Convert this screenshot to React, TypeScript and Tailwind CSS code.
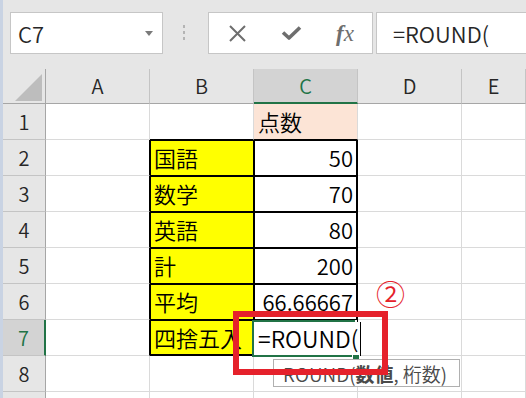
import React from "react";

const GRID = "border-r border-b border-[#dadada] bg-white";
const HDR = "border-r border-b border-r-[#c4c4c4] border-b-[#a6a6a6] bg-[#e6e6e6] flex items-center justify-center text-[20px] text-[#262626]";
const RHDR = "border-r border-b border-r-[#a6a6a6] border-b-[#c4c4c4] bg-[#e6e6e6] flex items-center justify-center text-[20px] text-[#262626]";
const A_T = "border-r border-b border-r-black border-b-[#dadada] bg-white";
const B_LBL = "border-r border-b border-black bg-[#ffff00] shadow-[inset_1px_1px_0_#000] flex items-center pl-[4px] text-[22px] text-black";
const B_LBL_LAST = "border-r border-b border-black bg-[#ffff00] shadow-[inset_1px_1px_0_#000,inset_0_-1px_0_#000] flex items-center pl-[4px] text-[22px] text-black";
const C_NUM = "border-r border-b border-black bg-white shadow-[inset_1px_1px_0_#000,inset_-1px_0_0_#000] flex items-center justify-end pr-[4px] text-[22px] text-black";

const rows: [string, string][] = [
  ["国語", "50"],
  ["数学", "70"],
  ["英語", "80"],
  ["計", "200"],
  ["平均", "66.66667"],
];

export default function App() {
  return (
    <div className="relative w-[526px] h-[398px] overflow-hidden flex bg-[#e6e6e6] font-['Noto_Sans_CJK_JP','Noto_Sans',sans-serif] font-[350]">
      <div className="w-[3px] shrink-0 bg-[#c9d3e3]" />
      <div className="flex-1 min-w-0 flex flex-col">
        {/* formula bar */}
        <div className="h-[69px] shrink-0 flex items-start pt-[12px]">
          <div className="ml-[7px] w-[153px] h-[42px] bg-white border border-[#c6c6c6] flex items-center justify-between pl-[7px] pr-[9px]">
            <span className="text-[22px] leading-none text-[#262626]">C7</span>
            <svg width="8" height="5" viewBox="0 0 8 5">
              <path d="M0 0h8L4 5z" fill="#7a7a7a" />
            </svg>
          </div>
          <div className="ml-[20px] mt-[13px] flex flex-col gap-[3px]">
            <div className="w-[2px] h-[3px] bg-[#b4b4b4]" />
            <div className="w-[2px] h-[3px] bg-[#b4b4b4]" />
            <div className="w-[2px] h-[3px] bg-[#b4b4b4]" />
          </div>
          <div className="ml-[23px] w-[165px] h-[42px] bg-white border border-[#c6c6c6] flex items-center pl-[1px]">
            <div className="w-[54px] flex justify-center">
              <svg width="19" height="19" viewBox="0 0 19 19">
                <path d="M2 2L17 17M17 2L2 17" stroke="#6e6e6e" strokeWidth="2" fill="none" />
              </svg>
            </div>
            <div className="w-[54px] flex justify-center">
              <svg width="21" height="14" viewBox="0 0 21 14">
                <path d="M2 6.5L8 12L19 1.5" stroke="#6e6e6e" strokeWidth="3.6" fill="none" strokeLinejoin="round" />
              </svg>
            </div>
            <div className="w-[54px] flex justify-center">
              <span className="font-['Liberation_Serif',serif] italic text-[23px] leading-none text-[#6e6e6e]">
                <span className="font-bold">f</span>x
              </span>
            </div>
          </div>
          <div className="ml-[3px] flex-1 h-[42px] bg-white border border-r-0 border-[#c6c6c6] flex items-center pl-[16px]">
            <span className="text-[22px] leading-none text-[#262626]">=ROUND(</span>
          </div>
        </div>

        {/* sheet */}
        <div className="grid grid-cols-[43px_104px_104px_104px_104px_1fr] grid-rows-[35px_repeat(9,36px)] bg-white">
          {/* header row */}
          <div className="border-r border-b border-r-[#a6a6a6] border-b-[#a6a6a6] bg-[#e6e6e6] flex items-end justify-end pr-[3px] pb-[2px]">
            <svg width="27" height="27" viewBox="0 0 27 27">
              <path d="M27 0V27H0z" fill="#bdbdbd" />
            </svg>
          </div>
          <div className={HDR}>A</div>
          <div className={HDR}>B</div>
          <div className="border-r border-r-[#c4c4c4] border-b-2 border-b-[#217346] bg-[#d3d3d3] flex items-center justify-center text-[20px] text-[#217346]">C</div>
          <div className={HDR}>D</div>
          <div className={HDR}>E</div>

          {/* row 1 */}
          <div className={RHDR}>1</div>
          <div className={GRID} />
          <div className="border-r border-b border-r-[#dadada] border-b-black bg-white" />
          <div className="border-r border-b border-r-[#dadada] border-b-black bg-[#fce4d6] flex items-center pl-[4px] text-[22px] text-black">点数</div>
          <div className={GRID} />
          <div className={GRID} />

          {rows.map(([label, val], i) => (
            <React.Fragment key={label}>
              <div className={RHDR}>{i + 2}</div>
              <div className={A_T} />
              <div className={B_LBL}>{label}</div>
              <div className={C_NUM}>{val}</div>
              <div className={GRID} />
              <div className={GRID} />
            </React.Fragment>
          ))}

          {/* row 7 */}
          <div className="border-r-2 border-b border-r-[#217346] border-b-[#c4c4c4] bg-[#d3d3d3] flex items-center justify-center text-[20px] text-[#217346]">7</div>
          <div className={A_T} />
          <div className={B_LBL_LAST}>四捨五入</div>
          <div className="relative border-r border-b border-black bg-white">
            <div className="absolute left-0 top-[2px] w-[108px] h-[33px] bg-white" />
            <div className="absolute left-[-2px] top-0 w-[103px] h-[37px] border-2 border-r-0 border-[#217346]" />
            <div className="absolute left-[4px] top-0 h-[36px] flex items-center text-[23px] leading-none text-black">=ROUND(</div>
            <div className="absolute left-[106px] top-[2px] w-px h-[34px] bg-black" />
            <div className="absolute left-[98px] top-[34px] w-[8px] h-[8px] bg-[#217346] border border-white" />
          </div>
          <div className={GRID} />
          <div className={GRID} />

          {/* row 8 */}
          <div className={RHDR}>8</div>
          <div className={GRID} />
          <div className={GRID} />
          <div className={GRID} />
          <div className={GRID} />
          <div className={GRID} />

          {/* row 9 (mostly below the fold) */}
          <div className="border-r border-b border-r-[#a6a6a6] border-b-[#c4c4c4] bg-[#e6e6e6]" />
          <div className={GRID} />
          <div className={GRID} />
          <div className={GRID} />
          <div className={GRID} />
          <div className={GRID} />
        </div>
      </div>

      {/* tooltip */}
      <div className="absolute left-[273px] top-[359px] w-[187px] h-[28px] bg-white border border-[#b0b0b0] flex items-center pl-[9px] text-[19px] leading-none text-[#4a4a4a] whitespace-nowrap">
        ROUND(<span className="font-bold">数値</span>, 桁数)
      </div>

      {/* annotation */}
      <div className="absolute left-[233px] top-[311px] w-[155px] h-[64px] border-[6px] border-[#e5212b]" />
      <div className="absolute left-[376px] top-[279px] text-[29px] leading-none text-[#e5212b]">②</div>
    </div>
  );
}
